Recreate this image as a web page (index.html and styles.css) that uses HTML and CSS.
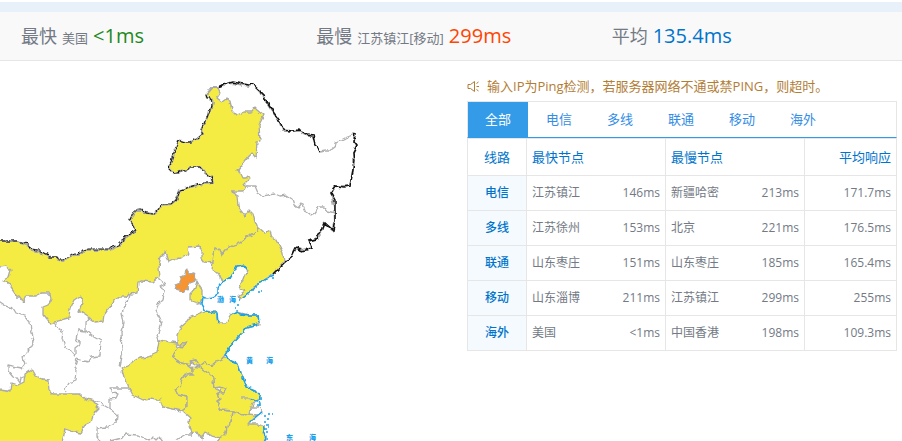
FILE: index.html
```html
<!DOCTYPE html>
<html lang="zh-CN">
<head>
<meta charset="utf-8">
<title>Ping检测</title>
<link rel="stylesheet" href="styles.css">
</head>
<body>
<header class="summary">
  <div class="stat"><span class="stat-label">最快</span> <span class="stat-place">美国</span> <span class="stat-value fast">&lt;1ms</span></div>
  <div class="stat"><span class="stat-label">最慢</span> <span class="stat-place">江苏镇江[移动]</span> <span class="stat-value slow">299ms</span></div>
  <div class="stat"><span class="stat-label">平均</span> <span class="stat-value average">135.4ms</span></div>
</header>
<main class="content">
  <div class="map">
    <svg class="map-drawing" viewBox="0 61 460 380" width="460" height="380" role="img" aria-label="中国地图">
      <defs>
        <filter id="ragged" filterUnits="userSpaceOnUse" x="-5" y="61" width="465" height="385" color-interpolation-filters="sRGB">
          <feTurbulence type="fractalNoise" baseFrequency="0.16" numOctaves="2" seed="4" result="noise"/>
          <feDisplacementMap in="SourceGraphic" in2="noise" scale="5" xChannelSelector="R" yChannelSelector="G"/>
        </filter>
      </defs>
      <g filter="url(#ragged)">
      <!-- Provinces -->
      <g class="province hot">
        <path d="M219 88L212 88 206 95 207 98 211 98 213 102 212 106 209 110 208 115 205 123 201 131 203 134 198 138 190 142 185 142 179 140 175 150 171 165 168 167 174 173 183 170 187 172 191 167 200 167 205 173 211 177 213 183 203 184 190 187 180 190 178 196 176 200 171 204 161 205 157 211 153 214 146 213 141 211 134 211 130 220 136 230 125 237 120 245 115 247 110 250 88 250 72 256 63 261 59 260 57 257 50 257 38 251 32 250 29 245 18 241 -8 241V268L6 266 11 270 9 277 2 281 8 283 15 292 16 297 19 297 23 302 26 296 36 296 42 293 50 293 51 299 48 305 43 307 43 314 50 323 69 318 70 308 74 300 80 296 83 300 79 311 88 317 95 322 103 321 104 315 110 307 118 297 125 297 128 293 130 294 137 293 138 282 141 281 153 282 159 277 158 268 161 257 166 252 169 262 175 259 180 258 187 255 189 247 198 246 202 250 202 258 205 262 213 263 215 248 218 249 221 255 225 250 232 246 240 243 247 237 258 232 258 225 254 222 252 214 249 211 245 216 238 207 237 195 232 192 236 192 243 192 246 186 244 184 250 178 247 176 245 178 242 178 238 170 245 161 252 153 256 158 257 142 260 141 259 125 264 115 258 110 255 107 251 112 244 112 237 115 232 110 230 101 226 99 222 102 217 98 221 92Z"/>
        <path d="M213 262L215 248 218 249 221 255 225 250 232 246 240 243 247 237 258 232 258 227 265 233 270 230 272 237 277 241 283 253 284 262 273 274 266 278 260 281 248 293 240 299 239 295 245 291 240 288 243 280 247 270 243 265 237 266 231 277 222 282 218 272 212 270Z"/>
        <path d="M197 281L200 287 202 290 202 297 200 304 191 301 191 293 195 288Z"/>
        <path d="M177 342L177 335 181 326 187 321 190 317 195 315 205 311 216 312 218 323 226 323 231 315 237 312 248 315 258 315 259 324 247 327 243 332 238 337 231 345 225 355 220 361 217 361 211 366 205 362 200 366 196 360 191 361 190 365 181 363 172 358 178 349 183 343 187 342 181 348Z"/>
        <path d="M159 340L177 343 178 349 172 358 181 363 189 365 193 369 193 375 185 373 182 379 180 387 175 389 178 395 187 397 187 407 182 411 172 409 163 407 160 400 155 400 150 399 143 400 133 395 129 388 127 382 124 377 121 367 128 365 140 358 148 357 157 353Z"/>
        <path d="M189 366L200 367 208 373 213 378 214 388 220 391 221 387 226 389 224 393 218 393 220 399 217 401 221 410 233 411 231 423 226 427 225 433 220 438 212 436 205 432 201 438 198 432 192 434 189 421 190 418 182 411 187 407 187 397 178 395 175 389 180 387 182 379 185 375 193 375 193 369Z"/>
        <path d="M190 361L196 360 200 366 205 362 211 366 217 361 225 358 238 364 241 373 247 387 255 390 261 397 258 401 253 404 249 414 243 415 233 411 221 410 217 401 220 399 218 393 224 393 226 389 221 387 214 388 213 378 208 373 200 367Z"/>
        <path d="M233 411L243 415 249 414 257 415 251 420 248 424 258 424 265 427 263 433 266 438 262 450H210L220 438 225 433 226 427 231 423Z"/>
        <path d="M-8 389L6 391 11 392 12 383 18 385 24 382 25 374 32 369 36 376 43 379 48 380 49 390 53 394 63 394 80 394 86 399 91 400 99 408 94 413 91 422 86 424 81 433 74 432 65 429 63 438 60 450H-8Z"/>
      </g>
      <path class="province warm" d="M187 269L190 274 195 273 194 278 196 281 190 283 188 287 189 290 185 289 184 292 177 290 175 285 180 283 180 277 184 276Z"/>
      <!-- Inner borders -->
      <g class="border">
        <path d="M246 186L255 186 258 193 263 196 275 194 280 196 286 195 292 199 294 205 298 208 302 203 306 212 311 216 314 214 319 207 324 207 327 211 335 213"/>
        <path d="M320 151L326 150 331 150 335 147 336 143 345 138 355 134"/>
        <path d="M159 277L160 280 165 284 160 287 165 290 163 300 158 305 156 310 160 318 162 323 157 335 159 340"/>
        <path d="M-8 297L5 306 13 308 16 313 25 316 30 322 31 330 34 341 31 347 26 352 23 358 25 364 22 368 16 367 8 365 8 371 13 377 18 380 20 383 21 378 26 376"/>
        <path d="M55 323L58 329 63 332 62 339 65 347 70 350 75 356 75 349 80 345 80 341 76 340 78 330 86 331 86 322 90 317M86 331L92 336 101 341 100 356 91 357 89 362 83 361 77 359 75 366 77 371 76 380 68 383 65 388 66 392"/>
        <path d="M129 293L127 303 122 313 124 323 121 331 122 352 119 366"/>
        <path d="M129 388L121 388 110 388 113 393 118 394 116 398 110 399 110 409 97 401 90 400M110 409L115 413 118 416 117 423 108 427 97 428 97 437 100 441"/>
        <path d="M110 441L122 438 125 434 138 435 144 438 149 441 152 437 156 441 160 437 163 441M176 441L182 437 187 434 192 434"/>
        <path d="M249 414L250 407 258 407 262 412 257 415M241 398L247 398 256 401"/>
      </g>
      <path class="frontier-shade" d="M219 88L212 88 206 95 207 98 211 98 213 102 212 106 209 110 208 115 205 123 201 131 203 134 198 138 190 142 185 142 179 140 175 150 171 165 168 167 174 173 183 170 187 172 191 167 200 167 205 173 211 177 213 183 203 184 190 187 180 190 178 196 176 200 171 204 161 205 157 211 153 214 146 213 141 211 134 211 130 220 136 230 125 237 120 245 115 247 110 250 88 250 72 256 63 261 59 260 57 257 50 257 38 251 32 250 29 245 18 241 -8 241"/>
      <path class="frontier" d="M206 95L207 98 211 98 212 106 209 110 208 115 205 123 201 131 203 134 198 138 190 142 185 142 179 140 175 150 171 165 168 167 174 173 183 170 187 172 191 167 200 167 205 173 211 177 213 183 203 183 190 187 180 190 178 196 176 200 171 204 161 204 157 211 153 214 146 213 141 210 134 210 130 220 136 230 125 236 120 244 115 246 110 249 88 249 72 255 63 260 59 260 57 257 50 257 38 250 32 249 29 244 18 241 -8 241"/>
      <path class="frontier-shade" d="M219 88L225 84 233 83 248 86 253 84 261 92 266 102 274 114 280 122 283 131 300 131 308 136 313 136 315 145 320 151M355 134L354 141 357 145 353 153 353 170 350 186 336 186 331 193 334 206 335 221 332 230 325 223 322 231 316 239 308 241 311 248 303 250 295 248 290 258 284 262 273 274"/>
      <path class="frontier bold" d="M219 87L225 84 233 82 248 85 253 84 261 91 266 101 274 113 280 121 283 130 292 131 300 130 308 135 313 136 315 145 320 151M355 134L354 141 357 145 353 153 354 161 353 170 350 186 344 187 336 186 331 193 335 200 335 221 333 230 325 223 322 231 318 234 316 239 308 241 312 248 303 251 295 248 290 258 284 263 273 274"/>
      <!-- Coastline -->
      <path class="coast" d="M273 276L266 279 260 282 254 288 248 293 243 297M247 270L243 265 237 266 231 277 222 282 218 288 218 293 212 297 207 298 203 296 202 304 206 311 213 313 217 313 218 323M231 315L237 312 241 314 248 315 258 315 259 322M258 324L247 327 243 332 238 337 231 345 225 355 227 359 238 364 242 376 247 387 255 390 261 397 260 401M251 399L260 403 260 407M262 412L257 416 250 422M263 427L266 437 264 441"/>
      </g>
      <!-- Islands -->
      <path class="islands" d="M252 290h2M256 287h1M258 292h2M257 284h2M261 291h1M239 300h1M237 305h2M235 308h1M272 278h2M264 416h2M267 419h2M264 422h2M268 414h2M272 414h1M266 425h3M268 427h1M264 429h3M266 432h2M259 399h3M257 405h3M267 439h1"/>
      <!-- Sea names -->
      <g class="sea">
        <text x="217" y="302">渤</text><text x="229" y="302">海</text>
        <text x="246" y="363">黄</text><text x="266" y="363">海</text>
        <text x="286" y="440">东</text><text x="309" y="440">海</text>
      </g>
    </svg>
  </div>
  <section class="results">
    <p class="notice">
      <svg class="speaker" viewBox="0 0 13 13" width="13" height="13" aria-hidden="true"><path d="M1 4.500H3.500L7.500 1.500V11.500L3.500 8.500H1ZM9.500 3.500L11.500 2M9.500 6.500H12M9.500 9.500L11.500 11"/></svg>
      <span>输入IP为Ping检测，若服务器网络不通或禁PING，则超时。</span>
    </p>
    <div class="tabs">
      <button class="tab active" type="button">全部</button>
      <button class="tab" type="button">电信</button>
      <button class="tab" type="button">多线</button>
      <button class="tab" type="button">联通</button>
      <button class="tab" type="button">移动</button>
      <button class="tab" type="button">海外</button>
    </div>
    <table class="lines">
      <colgroup><col class="col-line"><col class="col-node"><col class="col-node"><col class="col-average"></colgroup>
      <thead>
        <tr><th class="line" scope="col">线路</th><th scope="col">最快节点</th><th scope="col">最慢节点</th><th class="response" scope="col">平均响应</th></tr>
      </thead>
      <tbody>
        <tr><th class="line" scope="row">电信</th><td><div class="node"><span>江苏镇江</span><span>146ms</span></div></td><td><div class="node"><span>新疆哈密</span><span>213ms</span></div></td><td class="response">171.7ms</td></tr>
        <tr><th class="line" scope="row">多线</th><td><div class="node"><span>江苏徐州</span><span>153ms</span></div></td><td><div class="node"><span>北京</span><span>221ms</span></div></td><td class="response">176.5ms</td></tr>
        <tr><th class="line" scope="row">联通</th><td><div class="node"><span>山东枣庄</span><span>151ms</span></div></td><td><div class="node"><span>山东枣庄</span><span>185ms</span></div></td><td class="response">165.4ms</td></tr>
        <tr><th class="line" scope="row">移动</th><td><div class="node"><span>山东淄博</span><span>211ms</span></div></td><td><div class="node"><span>江苏镇江</span><span>299ms</span></div></td><td class="response">255ms</td></tr>
        <tr><th class="line" scope="row">海外</th><td><div class="node"><span>美国</span><span>&lt;1ms</span></div></td><td><div class="node"><span>中国香港</span><span>198ms</span></div></td><td class="response">109.3ms</td></tr>
      </tbody>
    </table>
  </section>
</main>
</body>
</html>
```

FILE: styles.css
```css
* {
  box-sizing: border-box;
}

body {
  margin: 0;
  padding-top: 2px;
  background: #fff;
  color: #737a85;
  font: 12px/18px "Open Sans", "Noto Sans CJK SC", sans-serif;
}

.summary {
  display: grid;
  grid-template-columns: repeat(3, 1fr);
  padding: 0 8px;
  border-top: 10px solid #e8f1f9;
  border-bottom: 1px solid #e6e6e6;
  background: #f9f9f9;
}

.stat {
  display: flex;
  align-items: baseline;
  gap: 5px;
  height: 48px;
  padding-left: 13px;
  line-height: 48px;
  white-space: nowrap;
}

.stat-label {
  font-size: 18px;
}

.stat-place {
  font-size: 13px;
}

.stat-value {
  font-size: 20px;
}

.fast {
  color: #1e8a1e;
}

.slow {
  color: #ff4500;
}

.average {
  color: #0074cc;
}

.content {
  display: grid;
  grid-template-columns: minmax(0, 1fr) 430px;
  padding-right: 5px;
}

.map {
  overflow: hidden;
}

.map-drawing {
  display: block;
}

.province {
  stroke: #aaa;
  stroke-width: 1.3;
  stroke-linejoin: round;
}

.hot {
  fill: #f5ec43;
}

.warm {
  fill: #f79432;
}

.border {
  fill: none;
  stroke: #b0b0b0;
  stroke-width: 1.3;
  stroke-linejoin: round;
}

.frontier-shade {
  fill: none;
  stroke: #aaa;
  stroke-width: 2;
}

.frontier {
  fill: none;
  stroke: #111;
  stroke-width: 1;
  stroke-dasharray: 5 1;
}

.bold {
  stroke-width: 1.5;
  stroke-dasharray: none;
}

.coast,
.islands {
  fill: none;
  stroke: #1ba1ea;
  stroke-width: 1.5;
}

.sea {
  fill: #1ba1ea;
  font: 900 7px "Noto Sans CJK SC", sans-serif;
}

.results {
  padding-top: 16px;
}

.notice {
  display: flex;
  align-items: center;
  gap: 7px;
  margin: 0 0 6px;
  color: #b27d35;
  font-size: 13px;
  white-space: nowrap;
}

.speaker {
  flex: none;
  fill: none;
  stroke: #b27d35;
}

.tabs {
  display: flex;
  gap: 1px;
  border: 1px solid #e6e6e6;
  border-bottom: 1px solid #319be8;
}

.tab {
  width: 60px;
  height: 35px;
  padding: 0;
  border: 0;
  background: none;
  color: #338de6;
  font: 13px/35px "Open Sans", "Noto Sans CJK SC", sans-serif;
}

.active {
  background: #339be8;
  color: #fff;
}

.lines {
  width: 100%;
  border-collapse: collapse;
  table-layout: fixed;
}

.col-line {
  width: 59px;
}

.col-node {
  width: 139px;
}

.lines th,
.lines td {
  height: 35px;
  padding: 0 5px;
  border: 1px solid #e6e6e6;
  text-align: left;
}

.lines th {
  color: #0074cc;
  font-weight: 400;
}

.lines thead th {
  height: 37px;
  font-size: 13px;
}

.lines .line {
  text-align: center;
}

.lines tbody .line {
  background: #f5fafe;
  font-weight: 500;
}

.lines .response {
  text-align: right;
}

.node {
  display: flex;
  justify-content: space-between;
}
```
